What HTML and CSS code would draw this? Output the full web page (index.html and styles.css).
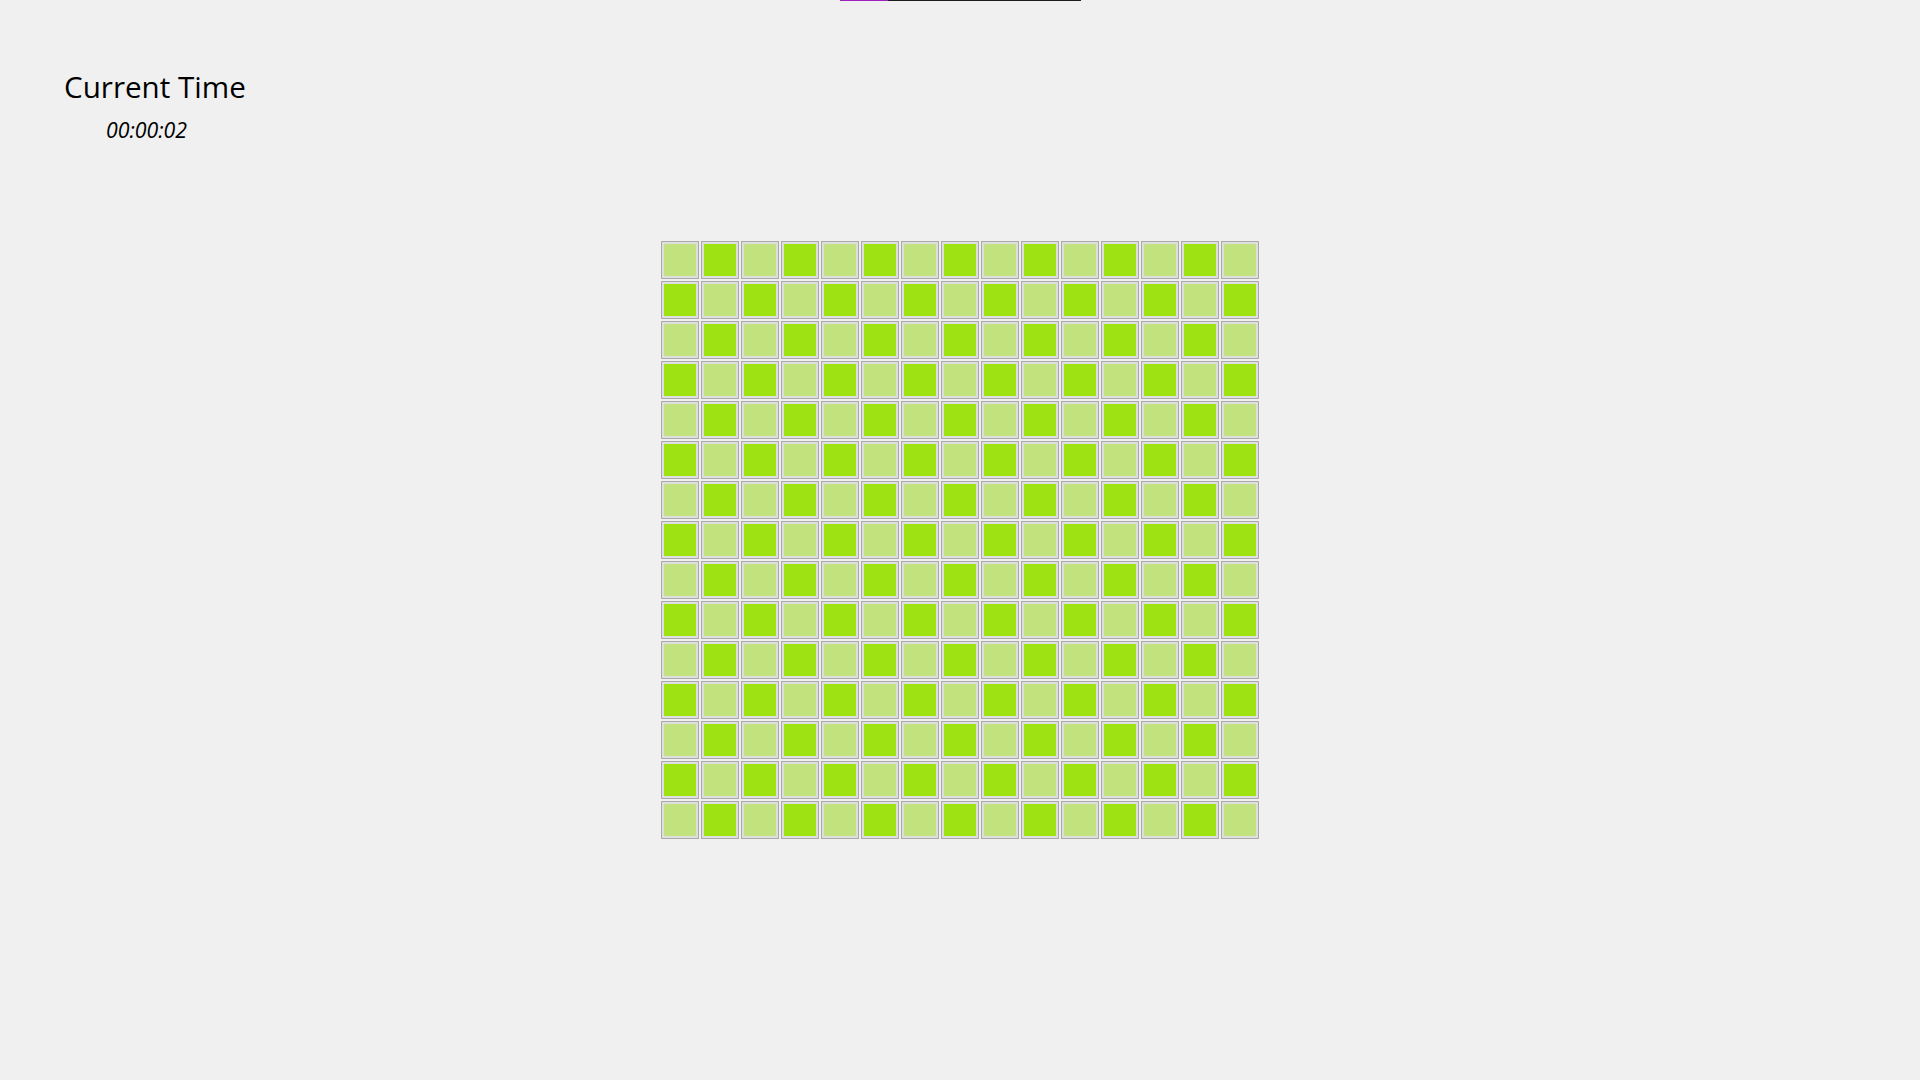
FILE: index.html
```html
<!DOCTYPE html>
<html lang="en">
<head>
<meta charset="utf-8">
<title>Current Time</title>
<link rel="stylesheet" href="styles.css">
</head>
<body>
<div class="stage">
  <div class="progress"><div class="progress-fill" style="width:20%"></div></div>
  <header class="clock">
    <h1 class="clock-title">Current Time</h1>
    <div class="clock-value">00:00:02</div>
  </header>
  <div class="board">
    <i class="l"></i><i class="d"></i><i class="l"></i><i class="d"></i><i class="l"></i><i class="d"></i><i class="l"></i><i class="d"></i><i class="l"></i><i class="d"></i><i class="l"></i><i class="d"></i><i class="l"></i><i class="d"></i><i class="l"></i>
    <i class="d"></i><i class="l"></i><i class="d"></i><i class="l"></i><i class="d"></i><i class="l"></i><i class="d"></i><i class="l"></i><i class="d"></i><i class="l"></i><i class="d"></i><i class="l"></i><i class="d"></i><i class="l"></i><i class="d"></i>
    <i class="l"></i><i class="d"></i><i class="l"></i><i class="d"></i><i class="l"></i><i class="d"></i><i class="l"></i><i class="d"></i><i class="l"></i><i class="d"></i><i class="l"></i><i class="d"></i><i class="l"></i><i class="d"></i><i class="l"></i>
    <i class="d"></i><i class="l"></i><i class="d"></i><i class="l"></i><i class="d"></i><i class="l"></i><i class="d"></i><i class="l"></i><i class="d"></i><i class="l"></i><i class="d"></i><i class="l"></i><i class="d"></i><i class="l"></i><i class="d"></i>
    <i class="l"></i><i class="d"></i><i class="l"></i><i class="d"></i><i class="l"></i><i class="d"></i><i class="l"></i><i class="d"></i><i class="l"></i><i class="d"></i><i class="l"></i><i class="d"></i><i class="l"></i><i class="d"></i><i class="l"></i>
    <i class="d"></i><i class="l"></i><i class="d"></i><i class="l"></i><i class="d"></i><i class="l"></i><i class="d"></i><i class="l"></i><i class="d"></i><i class="l"></i><i class="d"></i><i class="l"></i><i class="d"></i><i class="l"></i><i class="d"></i>
    <i class="l"></i><i class="d"></i><i class="l"></i><i class="d"></i><i class="l"></i><i class="d"></i><i class="l"></i><i class="d"></i><i class="l"></i><i class="d"></i><i class="l"></i><i class="d"></i><i class="l"></i><i class="d"></i><i class="l"></i>
    <i class="d"></i><i class="l"></i><i class="d"></i><i class="l"></i><i class="d"></i><i class="l"></i><i class="d"></i><i class="l"></i><i class="d"></i><i class="l"></i><i class="d"></i><i class="l"></i><i class="d"></i><i class="l"></i><i class="d"></i>
    <i class="l"></i><i class="d"></i><i class="l"></i><i class="d"></i><i class="l"></i><i class="d"></i><i class="l"></i><i class="d"></i><i class="l"></i><i class="d"></i><i class="l"></i><i class="d"></i><i class="l"></i><i class="d"></i><i class="l"></i>
    <i class="d"></i><i class="l"></i><i class="d"></i><i class="l"></i><i class="d"></i><i class="l"></i><i class="d"></i><i class="l"></i><i class="d"></i><i class="l"></i><i class="d"></i><i class="l"></i><i class="d"></i><i class="l"></i><i class="d"></i>
    <i class="l"></i><i class="d"></i><i class="l"></i><i class="d"></i><i class="l"></i><i class="d"></i><i class="l"></i><i class="d"></i><i class="l"></i><i class="d"></i><i class="l"></i><i class="d"></i><i class="l"></i><i class="d"></i><i class="l"></i>
    <i class="d"></i><i class="l"></i><i class="d"></i><i class="l"></i><i class="d"></i><i class="l"></i><i class="d"></i><i class="l"></i><i class="d"></i><i class="l"></i><i class="d"></i><i class="l"></i><i class="d"></i><i class="l"></i><i class="d"></i>
    <i class="l"></i><i class="d"></i><i class="l"></i><i class="d"></i><i class="l"></i><i class="d"></i><i class="l"></i><i class="d"></i><i class="l"></i><i class="d"></i><i class="l"></i><i class="d"></i><i class="l"></i><i class="d"></i><i class="l"></i>
    <i class="d"></i><i class="l"></i><i class="d"></i><i class="l"></i><i class="d"></i><i class="l"></i><i class="d"></i><i class="l"></i><i class="d"></i><i class="l"></i><i class="d"></i><i class="l"></i><i class="d"></i><i class="l"></i><i class="d"></i>
    <i class="l"></i><i class="d"></i><i class="l"></i><i class="d"></i><i class="l"></i><i class="d"></i><i class="l"></i><i class="d"></i><i class="l"></i><i class="d"></i><i class="l"></i><i class="d"></i><i class="l"></i><i class="d"></i><i class="l"></i>
  </div>
</div>
</body>
</html>
```

FILE: styles.css
```css
html, body {
  margin: 0;
  padding: 0;
  background: #f0f0f0;
}

body {
  font-family: "Open Sans", "Noto Sans", sans-serif;
  color: #000;
}

.stage {
  display: grid;
  grid-template-columns: 1fr;
  grid-template-rows: 1fr;
  width: 1920px;
  height: 1080px;
  overflow: hidden;
}

.stage > * {
  grid-area: 1 / 1;
}

.progress {
  justify-self: center;
  align-self: start;
  margin-left: 1px;
  width: 241px;
  height: 1px;
  background: #1c1c1c;
}

.progress-fill {
  height: 100%;
  background: #9c1fbe;
}

.clock {
  justify-self: start;
  align-self: start;
  padding: 67px 0 0 64px;
  display: flex;
  flex-direction: column;
}

.clock-title {
  margin: 0;
  font-size: 29.6px;
  font-weight: 400;
  line-height: 40px;
}

.clock-value {
  margin: 9px 0 0 42px;
  font-size: 21.3px;
  font-style: italic;
  line-height: 28px;
}

.board {
  justify-self: center;
  align-self: center;
  display: grid;
  grid-template-columns: repeat(15, 38px);
  grid-auto-rows: 38px;
  gap: 2px;
}

.board i {
  display: block;
  box-sizing: border-box;
  border: 1px solid #a9a9a9;
  box-shadow: inset 0 0 0 2px #dedede;
}

.board .l {
  background: #c1e27d;
}

.board .d {
  background: #9ee214;
}
```
